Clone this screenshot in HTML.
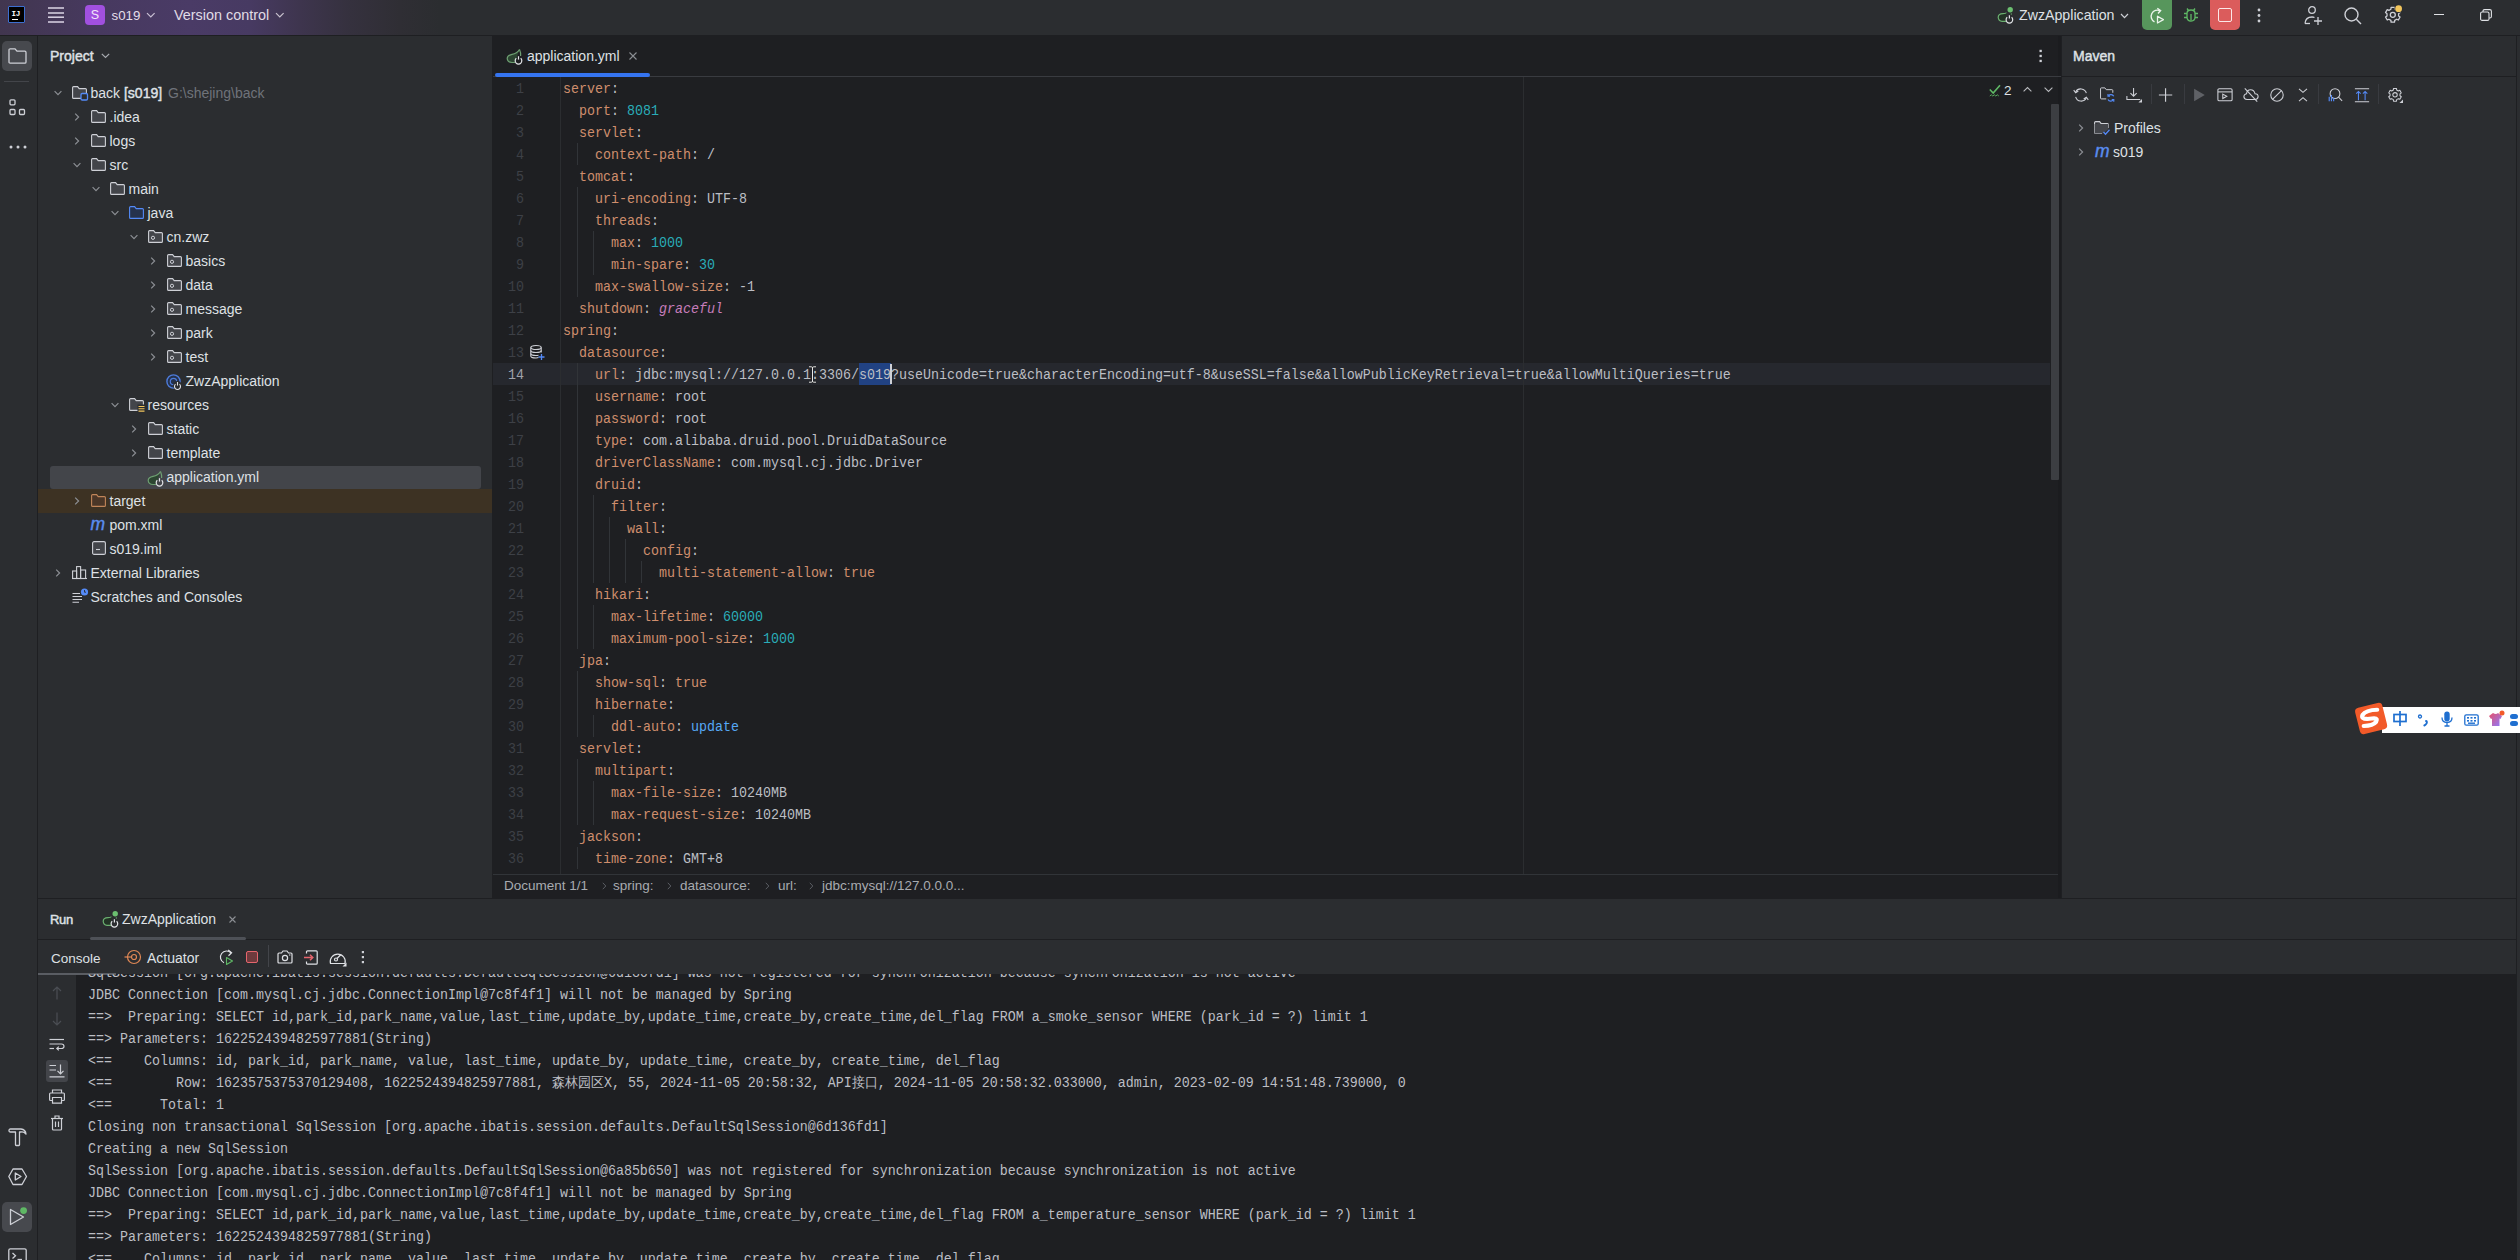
<!DOCTYPE html><html><head><meta charset="utf-8"><style>
*{margin:0;padding:0;box-sizing:border-box}
html,body{width:2520px;height:1260px;overflow:hidden;background:#2B2D30;font-family:"Liberation Sans",sans-serif;color:#DFE1E5;font-size:14px}
.a{position:absolute}
.m{font-family:"Liberation Mono",monospace;font-size:13.333px}
svg{position:absolute;overflow:visible}
#title{left:0;top:0;width:2520px;height:35px;background:linear-gradient(90deg,#41364F 0px,#47395F 100px,#4a3b66 190px,#473a62 250px,#3e354e 300px,#35313e 350px,#2f2e34 400px,#2B2D30 440px)}
.t{position:absolute;white-space:pre;line-height:17px}
.ln{position:absolute;white-space:pre;height:22px;line-height:22px;font-family:"Liberation Mono",monospace;font-size:13.333px;transform:translateY(0.8px) scale(1,1.07);transform-origin:0 14.5px}
.k{color:#CF8E6D}.n{color:#2AACB8}.v{color:#BCBEC4}.g{color:#C77DBB;font-style:italic}.b{color:#56A8F5}
.cj{display:inline-block;width:13px;text-align:center;font-size:13px;letter-spacing:0}
</style></head><body><div id="title" class="a"></div>
<div class="a" style="left:0px;top:35px;width:2520px;height:1px;background:#1E1F22;"></div>
<div class="a" style="left:37px;top:36px;width:1px;height:1224px;background:#1E1F22;"></div>
<div class="a" style="left:492px;top:36px;width:1px;height:862px;background:#1E1F22;"></div>
<div class="a" style="left:493px;top:36px;width:1568px;height:862px;background:#1E1F22;"></div>
<div class="a" style="left:2058px;top:36px;width:3px;height:862px;background:#1B1C1F;"></div>
<div class="a" style="left:2061px;top:36px;width:1px;height:862px;background:#1E1F22;"></div>
<div class="a" style="left:38px;top:898px;width:2478px;height:1px;background:#1E1F22;"></div>
<div class="a" style="left:76px;top:974px;width:2440px;height:286px;background:#1E1F22;"></div>
<div class="a" style="left:2516px;top:36px;width:1px;height:1224px;background:#1E1F22;"></div>
<!-- TITLE CONTENT -->
<div class="a" style="left:8px;top:6px;width:17px;height:17px;background:#000;border:1.3px solid #3d6fd0;border-radius:1px"></div>
<div class="a" style="left:11.5px;top:9.5px;font:bold 7.6px 'Liberation Mono',monospace;color:#fff;letter-spacing:-0.3px;line-height:8px">IJ</div>
<div class="a" style="left:12px;top:18.5px;width:6px;height:1.5px;background:#fff"></div>
<svg style="left:48px;top:7px" width="16" height="16"><g stroke="#D3CCDD" stroke-width="1.6"><line x1="0" y1="1" x2="16" y2="1"/><line x1="0" y1="6" x2="16" y2="6"/><line x1="0" y1="10.2" x2="16" y2="10.2"/><line x1="0" y1="15" x2="16" y2="15"/></g></svg>
<div class="a" style="left:85px;top:5px;width:20px;height:20px;background:#A150DF;border-radius:4px;color:#F3E6FA;font-size:12.5px;line-height:20px;text-align:center">S</div>
<div class="a" style="left:111.5px;top:7px;font-size:13.3px;line-height:17px;color:#E4DEEA">s019</div>
<svg style="left:146px;top:12px" width="10" height="7"><path d="M1 1.2 L4.8 5 L8.6 1.2" fill="none" stroke="#C9C0D4" stroke-width="1.2"/></svg>
<div class="a" style="left:174px;top:7px;font-size:14.4px;line-height:17px;color:#E0DCE6">Version control</div>
<svg style="left:275px;top:12px" width="10" height="7"><path d="M1 1.2 L4.8 5 L8.6 1.2" fill="none" stroke="#C9C3CF" stroke-width="1.2"/></svg>


<svg style="left:1994px;top:4px" width="22" height="22" viewBox="0 0 22 22"><path d="M12.4 8.6 Q12 9.6 9 9.6 Q4.2 9.6 4.2 13.5 Q4.6 17.1 8 17.3 L12 17.3" fill="#223325" stroke="#6BAF70" stroke-width="1.2"/><circle cx="16.2" cy="5.7" r="2.7" fill="#6BBF70"/><path d="M17.3 9 V11" stroke="#5E8F62" stroke-width="0.9"/><path d="M13.2 13.3 A3.3 3.3 0 1 0 17.6 13.3" fill="none" stroke="#E3E5E8" stroke-width="1.2"/><path d="M15.4 11.2 V14.6" stroke="#E3E5E8" stroke-width="1.2"/></svg>

<div class="a" style="left:2019px;top:7px;font-size:14.2px;line-height:17px;color:#DFE1E5">ZwzApplication</div>
<svg style="left:2120px;top:13px" width="10" height="7"><path d="M1 1 L4.5 4.7 L8 1" fill="none" stroke="#CED0D6" stroke-width="1.2"/></svg>
<div class="a" style="left:2142px;top:-4px;width:30px;height:34px;background:#57965C;border-radius:5px"></div>
<svg style="left:2148px;top:7px" width="18" height="18" viewBox="0 0 18 18"><path d="M12.2 3.8 A6 6 0 1 0 6.5 14.8" fill="none" stroke="#EAF3EA" stroke-width="1.4"/><path d="M9.3 1.3 L12.6 3.6 L10 6.4" fill="none" stroke="#EAF3EA" stroke-width="1.4"/><path d="M9.5 9.2 L15.4 12.6 L9.5 16 Z" fill="none" stroke="#EAF3EA" stroke-width="1.3" stroke-linejoin="round"/></svg>
<svg style="left:2183px;top:7px" width="16" height="16" viewBox="0 0 16 16"><g fill="none" stroke="#5FB865" stroke-width="1.3"><path d="M4 6.5 Q4 3 8 3 Q12 3 12 6.5 L12 10 Q12 14 8 14 Q4 14 4 10 Z"/><path d="M5.5 3.5 L4 1.5 M10.5 3.5 L12 1.5"/><path d="M1 6.5 H4 M12 6.5 H15 M1 10.5 H4 M12 10.5 H15"/><path d="M8 7 V13"/></g></svg>
<div class="a" style="left:2210px;top:-4px;width:30px;height:34px;background:#DB5C5C;border-radius:5px"></div>
<div class="a" style="left:2218px;top:8px;width:14px;height:14px;border:1.5px solid #FBE8E8;border-radius:2px"></div>
<svg style="left:2256px;top:8px" width="6" height="16"><g fill="#CED0D6"><circle cx="3" cy="2" r="1.4"/><circle cx="3" cy="7.5" r="1.4"/><circle cx="3" cy="13" r="1.4"/></g></svg>
<svg style="left:2304px;top:6px" width="19" height="19" viewBox="0 0 19 19"><g fill="none" stroke="#CED0D6" stroke-width="1.3"><circle cx="8" cy="4" r="3.3"/><path d="M1 17.5 Q1.5 11 8 11 Q9.5 11 10.5 11.5"/><path d="M1 17.5 H6"/><path d="M14 11 V19 M10 15 H18"/></g></svg>
<svg style="left:2344px;top:7px" width="18" height="18" viewBox="0 0 18 18"><g fill="none" stroke="#CED0D6" stroke-width="1.4"><circle cx="7.5" cy="7.5" r="6.5"/><path d="M12.3 12.3 L17 17"/></g></svg>
<svg style="left:2384px;top:6px" width="18" height="19" viewBox="0 0 18 19"><g fill="none" stroke="#CED0D6" stroke-width="1.3" stroke-linejoin="round"><path d="M14.59 9.93 L16.07 11.02 L14.36 13.98 L12.67 13.25 L10.72 14.38 L10.51 16.21 L7.09 16.21 L6.88 14.38 L4.93 13.25 L3.24 13.98 L1.53 11.02 L3.01 9.93 L3.01 7.67 L1.53 6.58 L3.24 3.62 L4.93 4.35 L6.88 3.22 L7.09 1.39 L10.51 1.39 L10.72 3.22 L12.67 4.35 L14.36 3.62 L16.07 6.58 L14.59 7.67 Z"/><circle cx="8.8" cy="8.8" r="2.5"/></g><circle cx="14.6" cy="2.7" r="4.3" fill="#2B2D30"/><circle cx="14.6" cy="2.7" r="3.4" fill="#F2C55C"/></svg>
<div class="a" style="left:2434px;top:14px;width:10px;height:1.2px;background:#DFE1E5"></div>
<svg style="left:2480px;top:9px" width="12" height="12" viewBox="0 0 12 12"><g fill="none" stroke="#DFE1E5" stroke-width="1.1"><rect x="0.6" y="3" width="8.4" height="8.4" rx="1.5"/><path d="M3 3 V2.2 Q3 0.6 4.6 0.6 H9.8 Q11.4 0.6 11.4 2.2 V7.4 Q11.4 9 9.8 9 H9"/></g></svg>


<div class="t" style="left:50px;top:48px;font-size:14px;color:#DFE1E5;-webkit-text-stroke:0.45px #DFE1E5">Project</div>
<svg style="left:101px;top:53px" width="9" height="6" viewBox="0 0 9 6"><path d="M0.8 0.8 L4.5 4.5 L8.2 0.8" fill="none" stroke="#A8ABB0" stroke-width="1.2"/></svg>
<div class="a" style="left:50px;top:466px;width:431px;height:23px;background:#43454A;border-radius:3px"></div>
<div class="a" style="left:38px;top:489px;width:454px;height:24px;background:#3D3223;"></div>
<svg style="left:53.5px;top:90px" width="8" height="6" viewBox="0 0 8 6"><path d="M0.6 1.2 L4 4.6 L7.4 1.2" fill="none" stroke="#8C8F94" stroke-width="1.2"/></svg>
<svg style="left:72px;top:86px" width="15" height="13" viewBox="0 0 15 13"><path d="M0.6 1.6 Q0.6 0.6 1.6 0.6 H5.6 L7.2 2.6 H13.4 Q14.4 2.6 14.4 3.6 V11.4 Q14.4 12.4 13.4 12.4 H1.6 Q0.6 12.4 0.6 11.4 Z" fill="#43454A" stroke="#CED0D6" stroke-width="1.1"/><rect x="9" y="7.5" width="6.5" height="6.5" rx="1.2" fill="#2B2D30" stroke="#548AF7" stroke-width="1.3"/></svg>
<div class="t" style="left:90.5px;top:85px;font-size:14px;color:#DFE1E5;">back <span style="-webkit-text-stroke:0.45px #DFE1E5">[s019]</span></div>
<div class="t" style="left:168px;top:85px;font-size:14px;color:#6F737A;">G:\shejing\back</div>
<svg style="left:73.5px;top:113px" width="6" height="8" viewBox="0 0 6 8"><path d="M1.2 0.6 L4.6 4 L1.2 7.4" fill="none" stroke="#8C8F94" stroke-width="1.2"/></svg>
<svg style="left:91px;top:110px" width="15" height="13" viewBox="0 0 15 13"><path d="M0.6 1.6 Q0.6 0.6 1.6 0.6 H5.6 L7.2 2.6 H13.4 Q14.4 2.6 14.4 3.6 V11.4 Q14.4 12.4 13.4 12.4 H1.6 Q0.6 12.4 0.6 11.4 Z" fill="#43454A" stroke="#CED0D6" stroke-width="1.1"/></svg>
<div class="t" style="left:109.5px;top:109px;font-size:14px;color:#DFE1E5;">.idea</div>
<svg style="left:73.5px;top:137px" width="6" height="8" viewBox="0 0 6 8"><path d="M1.2 0.6 L4.6 4 L1.2 7.4" fill="none" stroke="#8C8F94" stroke-width="1.2"/></svg>
<svg style="left:91px;top:134px" width="15" height="13" viewBox="0 0 15 13"><path d="M0.6 1.6 Q0.6 0.6 1.6 0.6 H5.6 L7.2 2.6 H13.4 Q14.4 2.6 14.4 3.6 V11.4 Q14.4 12.4 13.4 12.4 H1.6 Q0.6 12.4 0.6 11.4 Z" fill="#43454A" stroke="#CED0D6" stroke-width="1.1"/></svg>
<div class="t" style="left:109.5px;top:133px;font-size:14px;color:#DFE1E5;">logs</div>
<svg style="left:72.5px;top:162px" width="8" height="6" viewBox="0 0 8 6"><path d="M0.6 1.2 L4 4.6 L7.4 1.2" fill="none" stroke="#8C8F94" stroke-width="1.2"/></svg>
<svg style="left:91px;top:158px" width="15" height="13" viewBox="0 0 15 13"><path d="M0.6 1.6 Q0.6 0.6 1.6 0.6 H5.6 L7.2 2.6 H13.4 Q14.4 2.6 14.4 3.6 V11.4 Q14.4 12.4 13.4 12.4 H1.6 Q0.6 12.4 0.6 11.4 Z" fill="#43454A" stroke="#CED0D6" stroke-width="1.1"/></svg>
<div class="t" style="left:109.5px;top:157px;font-size:14px;color:#DFE1E5;">src</div>
<svg style="left:91.5px;top:186px" width="8" height="6" viewBox="0 0 8 6"><path d="M0.6 1.2 L4 4.6 L7.4 1.2" fill="none" stroke="#8C8F94" stroke-width="1.2"/></svg>
<svg style="left:110px;top:182px" width="15" height="13" viewBox="0 0 15 13"><path d="M0.6 1.6 Q0.6 0.6 1.6 0.6 H5.6 L7.2 2.6 H13.4 Q14.4 2.6 14.4 3.6 V11.4 Q14.4 12.4 13.4 12.4 H1.6 Q0.6 12.4 0.6 11.4 Z" fill="#43454A" stroke="#CED0D6" stroke-width="1.1"/></svg>
<div class="t" style="left:128.5px;top:181px;font-size:14px;color:#DFE1E5;">main</div>
<svg style="left:110.5px;top:210px" width="8" height="6" viewBox="0 0 8 6"><path d="M0.6 1.2 L4 4.6 L7.4 1.2" fill="none" stroke="#8C8F94" stroke-width="1.2"/></svg>
<svg style="left:129px;top:206px" width="15" height="13" viewBox="0 0 15 13"><path d="M0.6 1.6 Q0.6 0.6 1.6 0.6 H5.6 L7.2 2.6 H13.4 Q14.4 2.6 14.4 3.6 V11.4 Q14.4 12.4 13.4 12.4 H1.6 Q0.6 12.4 0.6 11.4 Z" fill="#25324D" stroke="#548AF7" stroke-width="1.1"/></svg>
<div class="t" style="left:147.5px;top:205px;font-size:14px;color:#DFE1E5;">java</div>
<svg style="left:129.5px;top:234px" width="8" height="6" viewBox="0 0 8 6"><path d="M0.6 1.2 L4 4.6 L7.4 1.2" fill="none" stroke="#8C8F94" stroke-width="1.2"/></svg>
<svg style="left:148px;top:230px" width="15" height="13" viewBox="0 0 15 13"><path d="M0.6 1.6 Q0.6 0.6 1.6 0.6 H5.6 L7.2 2.6 H13.4 Q14.4 2.6 14.4 3.6 V11.4 Q14.4 12.4 13.4 12.4 H1.6 Q0.6 12.4 0.6 11.4 Z" fill="#43454A" stroke="#CED0D6" stroke-width="1.1"/><circle cx="5" cy="7.8" r="1.6" fill="none" stroke="#CED0D6" stroke-width="1"/></svg>
<div class="t" style="left:166.5px;top:229px;font-size:14px;color:#DFE1E5;">cn.zwz</div>
<svg style="left:149.5px;top:257px" width="6" height="8" viewBox="0 0 6 8"><path d="M1.2 0.6 L4.6 4 L1.2 7.4" fill="none" stroke="#8C8F94" stroke-width="1.2"/></svg>
<svg style="left:167px;top:254px" width="15" height="13" viewBox="0 0 15 13"><path d="M0.6 1.6 Q0.6 0.6 1.6 0.6 H5.6 L7.2 2.6 H13.4 Q14.4 2.6 14.4 3.6 V11.4 Q14.4 12.4 13.4 12.4 H1.6 Q0.6 12.4 0.6 11.4 Z" fill="#43454A" stroke="#CED0D6" stroke-width="1.1"/><circle cx="5" cy="7.8" r="1.6" fill="none" stroke="#CED0D6" stroke-width="1"/></svg>
<div class="t" style="left:185.5px;top:253px;font-size:14px;color:#DFE1E5;">basics</div>
<svg style="left:149.5px;top:281px" width="6" height="8" viewBox="0 0 6 8"><path d="M1.2 0.6 L4.6 4 L1.2 7.4" fill="none" stroke="#8C8F94" stroke-width="1.2"/></svg>
<svg style="left:167px;top:278px" width="15" height="13" viewBox="0 0 15 13"><path d="M0.6 1.6 Q0.6 0.6 1.6 0.6 H5.6 L7.2 2.6 H13.4 Q14.4 2.6 14.4 3.6 V11.4 Q14.4 12.4 13.4 12.4 H1.6 Q0.6 12.4 0.6 11.4 Z" fill="#43454A" stroke="#CED0D6" stroke-width="1.1"/><circle cx="5" cy="7.8" r="1.6" fill="none" stroke="#CED0D6" stroke-width="1"/></svg>
<div class="t" style="left:185.5px;top:277px;font-size:14px;color:#DFE1E5;">data</div>
<svg style="left:149.5px;top:305px" width="6" height="8" viewBox="0 0 6 8"><path d="M1.2 0.6 L4.6 4 L1.2 7.4" fill="none" stroke="#8C8F94" stroke-width="1.2"/></svg>
<svg style="left:167px;top:302px" width="15" height="13" viewBox="0 0 15 13"><path d="M0.6 1.6 Q0.6 0.6 1.6 0.6 H5.6 L7.2 2.6 H13.4 Q14.4 2.6 14.4 3.6 V11.4 Q14.4 12.4 13.4 12.4 H1.6 Q0.6 12.4 0.6 11.4 Z" fill="#43454A" stroke="#CED0D6" stroke-width="1.1"/><circle cx="5" cy="7.8" r="1.6" fill="none" stroke="#CED0D6" stroke-width="1"/></svg>
<div class="t" style="left:185.5px;top:301px;font-size:14px;color:#DFE1E5;">message</div>
<svg style="left:149.5px;top:329px" width="6" height="8" viewBox="0 0 6 8"><path d="M1.2 0.6 L4.6 4 L1.2 7.4" fill="none" stroke="#8C8F94" stroke-width="1.2"/></svg>
<svg style="left:167px;top:326px" width="15" height="13" viewBox="0 0 15 13"><path d="M0.6 1.6 Q0.6 0.6 1.6 0.6 H5.6 L7.2 2.6 H13.4 Q14.4 2.6 14.4 3.6 V11.4 Q14.4 12.4 13.4 12.4 H1.6 Q0.6 12.4 0.6 11.4 Z" fill="#43454A" stroke="#CED0D6" stroke-width="1.1"/><circle cx="5" cy="7.8" r="1.6" fill="none" stroke="#CED0D6" stroke-width="1"/></svg>
<div class="t" style="left:185.5px;top:325px;font-size:14px;color:#DFE1E5;">park</div>
<svg style="left:149.5px;top:353px" width="6" height="8" viewBox="0 0 6 8"><path d="M1.2 0.6 L4.6 4 L1.2 7.4" fill="none" stroke="#8C8F94" stroke-width="1.2"/></svg>
<svg style="left:167px;top:350px" width="15" height="13" viewBox="0 0 15 13"><path d="M0.6 1.6 Q0.6 0.6 1.6 0.6 H5.6 L7.2 2.6 H13.4 Q14.4 2.6 14.4 3.6 V11.4 Q14.4 12.4 13.4 12.4 H1.6 Q0.6 12.4 0.6 11.4 Z" fill="#43454A" stroke="#CED0D6" stroke-width="1.1"/><circle cx="5" cy="7.8" r="1.6" fill="none" stroke="#CED0D6" stroke-width="1"/></svg>
<div class="t" style="left:185.5px;top:349px;font-size:14px;color:#DFE1E5;">test</div>
<svg style="left:166px;top:373.5px" width="17" height="17" viewBox="0 0 17 17"><circle cx="7.5" cy="7.5" r="6.6" fill="#25324D" stroke="#4D7BDA" stroke-width="1.4"/><circle cx="7.5" cy="7.5" r="3.2" fill="none" stroke="#4D7BDA" stroke-width="1.2"/><circle cx="11.5" cy="11.5" r="4.4" fill="#2B2D30"/><path d="M9.5 10.2 A3 3 0 1 0 13.5 10.2" fill="none" stroke="#DFE1E5" stroke-width="1.1"/><line x1="11.5" y1="8" x2="11.5" y2="11.6" stroke="#DFE1E5" stroke-width="1.1"/></svg>
<div class="t" style="left:185.5px;top:373px;font-size:14px;color:#DFE1E5;">ZwzApplication</div>
<svg style="left:110.5px;top:402px" width="8" height="6" viewBox="0 0 8 6"><path d="M0.6 1.2 L4 4.6 L7.4 1.2" fill="none" stroke="#8C8F94" stroke-width="1.2"/></svg>
<svg style="left:129px;top:398px" width="15" height="13" viewBox="0 0 15 13"><path d="M0.6 1.6 Q0.6 0.6 1.6 0.6 H5.6 L7.2 2.6 H13.4 Q14.4 2.6 14.4 3.6 V11.4 Q14.4 12.4 13.4 12.4 H1.6 Q0.6 12.4 0.6 11.4 Z" fill="#43454A" stroke="#CED0D6" stroke-width="1.1"/><rect x="8.5" y="6.5" width="7.5" height="8" fill="#2B2D30"/><path d="M9.5 8.5 H15.5 M9.5 10.8 H15.5 M9.5 13.1 H15.5" stroke="#F2C55C" stroke-width="1.1"/></svg>
<div class="t" style="left:147.5px;top:397px;font-size:14px;color:#DFE1E5;">resources</div>
<svg style="left:130.5px;top:425px" width="6" height="8" viewBox="0 0 6 8"><path d="M1.2 0.6 L4.6 4 L1.2 7.4" fill="none" stroke="#8C8F94" stroke-width="1.2"/></svg>
<svg style="left:148px;top:422px" width="15" height="13" viewBox="0 0 15 13"><path d="M0.6 1.6 Q0.6 0.6 1.6 0.6 H5.6 L7.2 2.6 H13.4 Q14.4 2.6 14.4 3.6 V11.4 Q14.4 12.4 13.4 12.4 H1.6 Q0.6 12.4 0.6 11.4 Z" fill="#43454A" stroke="#CED0D6" stroke-width="1.1"/></svg>
<div class="t" style="left:166.5px;top:421px;font-size:14px;color:#DFE1E5;">static</div>
<svg style="left:130.5px;top:449px" width="6" height="8" viewBox="0 0 6 8"><path d="M1.2 0.6 L4.6 4 L1.2 7.4" fill="none" stroke="#8C8F94" stroke-width="1.2"/></svg>
<svg style="left:148px;top:446px" width="15" height="13" viewBox="0 0 15 13"><path d="M0.6 1.6 Q0.6 0.6 1.6 0.6 H5.6 L7.2 2.6 H13.4 Q14.4 2.6 14.4 3.6 V11.4 Q14.4 12.4 13.4 12.4 H1.6 Q0.6 12.4 0.6 11.4 Z" fill="#43454A" stroke="#CED0D6" stroke-width="1.1"/></svg>
<div class="t" style="left:166.5px;top:445px;font-size:14px;color:#DFE1E5;">template</div>
<svg style="left:142.5px;top:465.5px" width="22" height="22" viewBox="0 0 22 22"><path d="M17.5 5.5 Q15 9.5 10 10.3 Q5.2 11.2 5.2 14.5 Q5.5 18.3 10 18.5 L13 18.5" fill="#2C4531" stroke="#6E9F72" stroke-width="1.2"/><path d="M17.5 5.5 Q18.9 8.5 18.6 12" fill="none" stroke="#6E9F72" stroke-width="1.2"/><path d="M14.3 14.3 A3.3 3.3 0 1 0 18.7 14.3" fill="none" stroke="#E3E5E8" stroke-width="1.2"/><path d="M16.5 12.2 V15.6" stroke="#E3E5E8" stroke-width="1.2"/></svg>
<div class="t" style="left:166.5px;top:469px;font-size:14px;color:#DFE1E5;">application.yml</div>
<svg style="left:73.5px;top:497px" width="6" height="8" viewBox="0 0 6 8"><path d="M1.2 0.6 L4.6 4 L1.2 7.4" fill="none" stroke="#8C8F94" stroke-width="1.2"/></svg>
<svg style="left:91px;top:494px" width="15" height="13" viewBox="0 0 15 13"><path d="M0.6 1.6 Q0.6 0.6 1.6 0.6 H5.6 L7.2 2.6 H13.4 Q14.4 2.6 14.4 3.6 V11.4 Q14.4 12.4 13.4 12.4 H1.6 Q0.6 12.4 0.6 11.4 Z" fill="#4A3627" stroke="#C08559" stroke-width="1.1"/></svg>
<div class="t" style="left:109.5px;top:493px;font-size:14px;color:#DFE1E5;">target</div>
<div class="t" style="left:90.5px;top:515.5px;font-size:17.5px;color:#5A8DF0;font-style:italic;line-height:17px;letter-spacing:-1px;-webkit-text-stroke:0.4px #5A8DF0">m</div>
<div class="t" style="left:109.5px;top:517px;font-size:14px;color:#DFE1E5;">pom.xml</div>
<svg style="left:92px;top:541px" width="14" height="14" viewBox="0 0 14 14"><rect x="0.6" y="0.6" width="12.8" height="12.8" rx="1.5" fill="#43454A" stroke="#CED0D6" stroke-width="1.1"/><path d="M4 8.5 H8" stroke="#CED0D6" stroke-width="1.1"/></svg>
<div class="t" style="left:109.5px;top:541px;font-size:14px;color:#DFE1E5;">s019.iml</div>
<svg style="left:54.5px;top:569px" width="6" height="8" viewBox="0 0 6 8"><path d="M1.2 0.6 L4.6 4 L1.2 7.4" fill="none" stroke="#8C8F94" stroke-width="1.2"/></svg>
<svg style="left:72px;top:566px" width="15" height="13" viewBox="0 0 15 13"><g fill="none" stroke="#CED0D6" stroke-width="1.1"><rect x="0.6" y="5" width="4" height="7.5"/><rect x="4.6" y="0.6" width="4" height="11.9"/><rect x="8.6" y="4" width="5" height="8.5"/><path d="M0 12.5 H15"/></g></svg>
<div class="t" style="left:90.5px;top:565px;font-size:14px;color:#DFE1E5;">External Libraries</div>
<svg style="left:72px;top:588px" width="17" height="15" viewBox="0 0 17 15"><g stroke="#CED0D6" stroke-width="1.1"><path d="M0.5 5.5 H8 M0.5 8.5 H10 M0.5 11.5 H10 M0.5 14.2 H7"/></g><circle cx="12.5" cy="4" r="3.6" fill="#548AF7"/><path d="M12.5 2 V4.2 H14" fill="none" stroke="#2B2D30" stroke-width="0.9"/></svg>
<div class="t" style="left:90.5px;top:589px;font-size:14px;color:#DFE1E5;">Scratches and Consoles</div>
<svg style="left:502px;top:44px" width="22" height="22" viewBox="0 0 22 22"><path d="M17.5 5.5 Q15 9.5 10 10.3 Q5.2 11.2 5.2 14.5 Q5.5 18.3 10 18.5 L13 18.5" fill="#2C4531" stroke="#6E9F72" stroke-width="1.2"/><path d="M17.5 5.5 Q18.9 8.5 18.6 12" fill="none" stroke="#6E9F72" stroke-width="1.2"/><path d="M14.3 14.3 A3.3 3.3 0 1 0 18.7 14.3" fill="none" stroke="#E3E5E8" stroke-width="1.2"/><path d="M16.5 12.2 V15.6" stroke="#E3E5E8" stroke-width="1.2"/></svg>
<div class="t" style="left:527px;top:48px;font-size:14px;color:#DFE1E5;">application.yml</div>
<svg style="left:629px;top:52px" width="8" height="8" viewBox="0 0 8 8"><path d="M0.5 0.5 L7.5 7.5 M7.5 0.5 L0.5 7.5" stroke="#8C8F94" stroke-width="1.1"/></svg>
<div class="a" style="left:493px;top:76px;width:1568px;height:1px;background:#393B40;"></div>
<div class="a" style="left:495px;top:73px;width:155px;height:3.5px;background:#3574F0;border-radius:2px"></div>
<svg style="left:2039px;top:49px" width="4" height="14" viewBox="0 0 4 14"><g fill="#CED0D6"><rect x="0.5" y="0.8" width="2.3" height="2.3"/><rect x="0.5" y="5.8" width="2.3" height="2.3"/><rect x="0.5" y="10.8" width="2.3" height="2.3"/></g></svg>
<div class="a" style="left:493px;top:363px;width:1557px;height:22px;background:#26282E;"></div>
<div class="a" style="left:560px;top:77px;width:1px;height:797px;background:#2B2D30;"></div>
<div class="a" style="left:1523px;top:77px;width:1px;height:797px;background:#2B2D30;"></div>
<svg style="left:1989px;top:84px" width="12" height="13" viewBox="0 0 12 13"><path d="M0.8 5.5 L4.2 9 L11 1.2" fill="none" stroke="#5FB865" stroke-width="1.6"/><path d="M0.8 12 L2.3 10.8 L3.8 12 L5.3 10.8 L6.8 12 L8.3 10.8 L9.8 12" fill="none" stroke="#5FB865" stroke-width="0.9"/></svg>
<div class="t" style="left:2004px;top:82px;font-size:13.5px;color:#DFE1E5;">2</div>
<svg style="left:2023px;top:87px" width="9" height="5" viewBox="0 0 9 5"><path d="M0.6 4.4 L4.5 0.6 L8.4 4.4" fill="none" stroke="#B7B9BD" stroke-width="1.1"/></svg>
<svg style="left:2044px;top:87px" width="9" height="5" viewBox="0 0 9 5"><path d="M0.6 0.6 L4.5 4.4 L8.4 0.6" fill="none" stroke="#B7B9BD" stroke-width="1.1"/></svg>
<div class="a" style="left:2051px;top:104px;width:8px;height:376px;background:#3C3E42;border-radius:1px"></div>
<div class="a" style="left:577px;top:143px;width:1px;height:22px;background:#313438;"></div>
<div class="a" style="left:577px;top:187px;width:1px;height:110px;background:#313438;"></div>
<div class="a" style="left:593px;top:231px;width:1px;height:44px;background:#313438;"></div>
<div class="a" style="left:577px;top:363px;width:1px;height:286px;background:#313438;"></div>
<div class="a" style="left:593px;top:495px;width:1px;height:88px;background:#313438;"></div>
<div class="a" style="left:609px;top:517px;width:1px;height:66px;background:#313438;"></div>
<div class="a" style="left:625px;top:539px;width:1px;height:44px;background:#313438;"></div>
<div class="a" style="left:641px;top:561px;width:1px;height:22px;background:#313438;"></div>
<div class="a" style="left:593px;top:605px;width:1px;height:44px;background:#313438;"></div>
<div class="a" style="left:577px;top:671px;width:1px;height:66px;background:#313438;"></div>
<div class="a" style="left:593px;top:715px;width:1px;height:22px;background:#313438;"></div>
<div class="a" style="left:577px;top:759px;width:1px;height:66px;background:#313438;"></div>
<div class="a" style="left:593px;top:781px;width:1px;height:44px;background:#313438;"></div>
<div class="a" style="left:577px;top:847px;width:1px;height:22px;background:#313438;"></div>
<div class="a" style="left:859px;top:363px;width:32px;height:22px;background:#214283;"></div>
<div class="ln" style="left:484px;top:78px;width:40px;text-align:right;color:#3D4046">1</div>
<div class="ln" style="left:563px;top:78px"><span class="k">server</span><span class="v">:</span></div>
<div class="ln" style="left:484px;top:100px;width:40px;text-align:right;color:#3D4046">2</div>
<div class="ln" style="left:579px;top:100px"><span class="k">port</span><span class="v">: </span><span class="n">8081</span></div>
<div class="ln" style="left:484px;top:122px;width:40px;text-align:right;color:#3D4046">3</div>
<div class="ln" style="left:579px;top:122px"><span class="k">servlet</span><span class="v">:</span></div>
<div class="ln" style="left:484px;top:144px;width:40px;text-align:right;color:#3D4046">4</div>
<div class="ln" style="left:595px;top:144px"><span class="k">context-path</span><span class="v">: /</span></div>
<div class="ln" style="left:484px;top:166px;width:40px;text-align:right;color:#3D4046">5</div>
<div class="ln" style="left:579px;top:166px"><span class="k">tomcat</span><span class="v">:</span></div>
<div class="ln" style="left:484px;top:188px;width:40px;text-align:right;color:#3D4046">6</div>
<div class="ln" style="left:595px;top:188px"><span class="k">uri-encoding</span><span class="v">: UTF-8</span></div>
<div class="ln" style="left:484px;top:210px;width:40px;text-align:right;color:#3D4046">7</div>
<div class="ln" style="left:595px;top:210px"><span class="k">threads</span><span class="v">:</span></div>
<div class="ln" style="left:484px;top:232px;width:40px;text-align:right;color:#3D4046">8</div>
<div class="ln" style="left:611px;top:232px"><span class="k">max</span><span class="v">: </span><span class="n">1000</span></div>
<div class="ln" style="left:484px;top:254px;width:40px;text-align:right;color:#3D4046">9</div>
<div class="ln" style="left:611px;top:254px"><span class="k">min-spare</span><span class="v">: </span><span class="n">30</span></div>
<div class="ln" style="left:484px;top:276px;width:40px;text-align:right;color:#3D4046">10</div>
<div class="ln" style="left:595px;top:276px"><span class="k">max-swallow-size</span><span class="v">: -1</span></div>
<div class="ln" style="left:484px;top:298px;width:40px;text-align:right;color:#3D4046">11</div>
<div class="ln" style="left:579px;top:298px"><span class="k">shutdown</span><span class="v">: </span><span class="g">graceful</span></div>
<div class="ln" style="left:484px;top:320px;width:40px;text-align:right;color:#3D4046">12</div>
<div class="ln" style="left:563px;top:320px"><span class="k">spring</span><span class="v">:</span></div>
<div class="ln" style="left:484px;top:342px;width:40px;text-align:right;color:#3D4046">13</div>
<div class="ln" style="left:579px;top:342px"><span class="k">datasource</span><span class="v">:</span></div>
<div class="ln" style="left:484px;top:364px;width:40px;text-align:right;color:#A1A3AB">14</div>
<div class="ln" style="left:595px;top:364px"><span class="k">url</span><span class="v">: jdbc:mysql://127.0.0.1:3306/s019?useUnicode=true&amp;characterEncoding=utf-8&amp;useSSL=false&amp;allowPublicKeyRetrieval=true&amp;allowMultiQueries=true</span></div>
<div class="ln" style="left:484px;top:386px;width:40px;text-align:right;color:#3D4046">15</div>
<div class="ln" style="left:595px;top:386px"><span class="k">username</span><span class="v">: root</span></div>
<div class="ln" style="left:484px;top:408px;width:40px;text-align:right;color:#3D4046">16</div>
<div class="ln" style="left:595px;top:408px"><span class="k">password</span><span class="v">: root</span></div>
<div class="ln" style="left:484px;top:430px;width:40px;text-align:right;color:#3D4046">17</div>
<div class="ln" style="left:595px;top:430px"><span class="k">type</span><span class="v">: com.alibaba.druid.pool.DruidDataSource</span></div>
<div class="ln" style="left:484px;top:452px;width:40px;text-align:right;color:#3D4046">18</div>
<div class="ln" style="left:595px;top:452px"><span class="k">driverClassName</span><span class="v">: com.mysql.cj.jdbc.Driver</span></div>
<div class="ln" style="left:484px;top:474px;width:40px;text-align:right;color:#3D4046">19</div>
<div class="ln" style="left:595px;top:474px"><span class="k">druid</span><span class="v">:</span></div>
<div class="ln" style="left:484px;top:496px;width:40px;text-align:right;color:#3D4046">20</div>
<div class="ln" style="left:611px;top:496px"><span class="k">filter</span><span class="v">:</span></div>
<div class="ln" style="left:484px;top:518px;width:40px;text-align:right;color:#3D4046">21</div>
<div class="ln" style="left:627px;top:518px"><span class="k">wall</span><span class="v">:</span></div>
<div class="ln" style="left:484px;top:540px;width:40px;text-align:right;color:#3D4046">22</div>
<div class="ln" style="left:643px;top:540px"><span class="k">config</span><span class="v">:</span></div>
<div class="ln" style="left:484px;top:562px;width:40px;text-align:right;color:#3D4046">23</div>
<div class="ln" style="left:659px;top:562px"><span class="k">multi-statement-allow</span><span class="v">: </span><span class="k">true</span></div>
<div class="ln" style="left:484px;top:584px;width:40px;text-align:right;color:#3D4046">24</div>
<div class="ln" style="left:595px;top:584px"><span class="k">hikari</span><span class="v">:</span></div>
<div class="ln" style="left:484px;top:606px;width:40px;text-align:right;color:#3D4046">25</div>
<div class="ln" style="left:611px;top:606px"><span class="k">max-lifetime</span><span class="v">: </span><span class="n">60000</span></div>
<div class="ln" style="left:484px;top:628px;width:40px;text-align:right;color:#3D4046">26</div>
<div class="ln" style="left:611px;top:628px"><span class="k">maximum-pool-size</span><span class="v">: </span><span class="n">1000</span></div>
<div class="ln" style="left:484px;top:650px;width:40px;text-align:right;color:#3D4046">27</div>
<div class="ln" style="left:579px;top:650px"><span class="k">jpa</span><span class="v">:</span></div>
<div class="ln" style="left:484px;top:672px;width:40px;text-align:right;color:#3D4046">28</div>
<div class="ln" style="left:595px;top:672px"><span class="k">show-sql</span><span class="v">: </span><span class="k">true</span></div>
<div class="ln" style="left:484px;top:694px;width:40px;text-align:right;color:#3D4046">29</div>
<div class="ln" style="left:595px;top:694px"><span class="k">hibernate</span><span class="v">:</span></div>
<div class="ln" style="left:484px;top:716px;width:40px;text-align:right;color:#3D4046">30</div>
<div class="ln" style="left:611px;top:716px"><span class="k">ddl-auto</span><span class="v">: </span><span class="b">update</span></div>
<div class="ln" style="left:484px;top:738px;width:40px;text-align:right;color:#3D4046">31</div>
<div class="ln" style="left:579px;top:738px"><span class="k">servlet</span><span class="v">:</span></div>
<div class="ln" style="left:484px;top:760px;width:40px;text-align:right;color:#3D4046">32</div>
<div class="ln" style="left:595px;top:760px"><span class="k">multipart</span><span class="v">:</span></div>
<div class="ln" style="left:484px;top:782px;width:40px;text-align:right;color:#3D4046">33</div>
<div class="ln" style="left:611px;top:782px"><span class="k">max-file-size</span><span class="v">: 10240MB</span></div>
<div class="ln" style="left:484px;top:804px;width:40px;text-align:right;color:#3D4046">34</div>
<div class="ln" style="left:611px;top:804px"><span class="k">max-request-size</span><span class="v">: 10240MB</span></div>
<div class="ln" style="left:484px;top:826px;width:40px;text-align:right;color:#3D4046">35</div>
<div class="ln" style="left:579px;top:826px"><span class="k">jackson</span><span class="v">:</span></div>
<div class="ln" style="left:484px;top:848px;width:40px;text-align:right;color:#3D4046">36</div>
<div class="ln" style="left:595px;top:848px"><span class="k">time-zone</span><span class="v">: GMT+8</span></div>
<div class="a" style="left:890px;top:364px;width:2px;height:20px;background:#CED0D6;"></div>
<svg style="left:808px;top:366px" width="9" height="17" viewBox="0 0 9 17"><path d="M1 0.8 H3.5 Q4.5 0.8 4.5 2 V15 Q4.5 16.2 3.5 16.2 H1 M8 0.8 H5.5 Q4.5 0.8 4.5 2 M8 16.2 H5.5 Q4.5 16.2 4.5 15 " fill="none" stroke="#1E1F22" stroke-width="2.2"/><path d="M1 0.8 H3.5 Q4.5 0.8 4.5 2 V15 Q4.5 16.2 3.5 16.2 H1 M8 0.8 H5.5 Q4.5 0.8 4.5 2 M8 16.2 H5.5 Q4.5 16.2 4.5 15 " fill="none" stroke="#E6E6E6" stroke-width="1"/></svg>
<svg style="left:530px;top:345px" width="15" height="15" viewBox="0 0 15 15"><g fill="none" stroke="#CED0D6" stroke-width="1.1"><ellipse cx="6" cy="2.5" rx="5.2" ry="2"/><path d="M0.8 2.5 V11 Q0.8 13 6 13 Q7.5 13 8.5 12.6"/><path d="M11.2 2.5 V7.5"/><path d="M0.8 5.5 Q0.8 7.5 6 7.5 Q11.2 7.5 11.2 5.5"/><path d="M0.8 8.5 Q0.8 10.5 6 10.5 Q7.5 10.5 8.5 10.2"/></g><path d="M11.5 9 V15 M8.5 12 H14.5" stroke="#548AF7" stroke-width="1.3"/></svg>
<div class="a" style="left:493px;top:874px;width:1565px;height:1px;background:#313438;"></div>
<div class="t" style="left:504px;top:877px;font-size:13.5px;color:#A8ABB0;">Document 1/1</div>
<div class="t" style="left:613px;top:877px;font-size:13.5px;color:#A8ABB0;">spring:</div>
<div class="t" style="left:680px;top:877px;font-size:13.5px;color:#A8ABB0;">datasource:</div>
<div class="t" style="left:778px;top:877px;font-size:13.5px;color:#A8ABB0;">url:</div>
<div class="t" style="left:822px;top:877px;font-size:13.5px;color:#A8ABB0;">jdbc:mysql://127.0.0.0...</div>
<svg style="left:602px;top:882px" width="5" height="8" viewBox="0 0 5 8"><path d="M0.8 0.8 L3.8 4 L0.8 7.2" fill="none" stroke="#5A5D63" stroke-width="1"/></svg>
<svg style="left:667px;top:882px" width="5" height="8" viewBox="0 0 5 8"><path d="M0.8 0.8 L3.8 4 L0.8 7.2" fill="none" stroke="#5A5D63" stroke-width="1"/></svg>
<svg style="left:765px;top:882px" width="5" height="8" viewBox="0 0 5 8"><path d="M0.8 0.8 L3.8 4 L0.8 7.2" fill="none" stroke="#5A5D63" stroke-width="1"/></svg>
<svg style="left:809px;top:882px" width="5" height="8" viewBox="0 0 5 8"><path d="M0.8 0.8 L3.8 4 L0.8 7.2" fill="none" stroke="#5A5D63" stroke-width="1"/></svg>
<div class="t" style="left:2073px;top:48px;font-size:14px;color:#DFE1E5;-webkit-text-stroke:0.45px #DFE1E5">Maven</div>
<div class="a" style="left:2062px;top:76px;width:454px;height:1px;background:#1E1F22;"></div>
<svg style="left:2073px;top:86.5px" width="16" height="16" viewBox="0 0 18 18"><g fill="none" stroke="#CED0D6" stroke-width="1.2"><path d="M15 7 A6.5 6.5 0 0 0 3 5.5"/><path d="M3 11 A6.5 6.5 0 0 0 15 12.5"/><path d="M0.8 3.5 L3 6.5 L6 4.5"/><path d="M17.2 14.5 L15 11.5 L12 13.5"/></g></svg>
<svg style="left:2100px;top:86.5px" width="16" height="16" viewBox="0 0 18 18"><g fill="none" stroke="#CED0D6" stroke-width="1.1"><path d="M0.6 2 Q0.6 1 1.6 1 H5.5 L7 3 H13.4 Q14.4 3 14.4 4 V6.5"/><path d="M0.6 2 V12.4 Q0.6 13.4 1.6 13.4 H7"/></g><g fill="none" stroke="#548AF7" stroke-width="1.3"><path d="M15.5 10.5 A3.6 3.6 0 0 0 9.5 10"/><path d="M9 14 A3.6 3.6 0 0 0 15 14.5"/><path d="M9 8 V10.3 H11.3 M15.5 16.5 V14.2 H13.2"/></g></svg>
<svg style="left:2126px;top:86.5px" width="16" height="16" viewBox="0 0 18 18"><g fill="none" stroke="#CED0D6" stroke-width="1.2"><path d="M8.5 1 V10 M5 6.8 L8.5 10.3 L12 6.8"/><path d="M1 10 V14 H16"/></g><path d="M18 13.5 V17.5 H14 Z" fill="#CED0D6"/></svg>
<div class="a" style="left:2151px;top:84px;width:1px;height:20px;background:#393B40;"></div>
<svg style="left:2158px;top:86.5px" width="16" height="16" viewBox="0 0 18 18"><path d="M8.5 1.5 V16.5 M1 9 H16" fill="none" stroke="#CED0D6" stroke-width="1.3"/></svg>
<div class="a" style="left:2184px;top:84px;width:1px;height:20px;background:#393B40;"></div>
<svg style="left:2191px;top:86.5px" width="16" height="16" viewBox="0 0 18 18"><path d="M3.5 2 L15.5 9 L3.5 16 Z" fill="#5F6166"/></svg>
<svg style="left:2217px;top:86.5px" width="16" height="16" viewBox="0 0 18 18"><g fill="none" stroke="#CED0D6" stroke-width="1.2"><rect x="1" y="2" width="16" height="13.5" rx="1.5"/><path d="M1 5.5 H17"/><path d="M6.5 8 L11 10.5 L6.5 13 Z"/></g></svg>
<svg style="left:2243px;top:86.5px" width="16" height="16" viewBox="0 0 18 18"><g fill="none" stroke="#CED0D6" stroke-width="1.2"><path d="M4.5 14 H13.5 Q17 14 17 10.8 Q17 7.5 13.5 7.5 Q12.5 3 8.5 3 Q4.5 3 4 7.5 Q1 8 1 10.8 Q1 14 4.5 14 Z"/><path d="M2 1.5 L16 16.5"/></g></svg>
<svg style="left:2269px;top:86.5px" width="16" height="16" viewBox="0 0 18 18"><g fill="none" stroke="#CED0D6" stroke-width="1.2"><circle cx="9" cy="9" r="7"/><path d="M4 14 L14 4"/></g></svg>
<svg style="left:2295px;top:86.5px" width="16" height="16" viewBox="0 0 18 18"><g fill="none" stroke="#CED0D6" stroke-width="1.2"><path d="M4.5 2 L9 6 L13.5 2"/><path d="M4.5 16 L9 12 L13.5 16"/></g></svg>
<div class="a" style="left:2318px;top:84px;width:1px;height:20px;background:#393B40;"></div>
<svg style="left:2327px;top:86.5px" width="16" height="16" viewBox="0 0 18 18"><g fill="none" stroke="#CED0D6" stroke-width="1.2"><circle cx="9" cy="7.5" r="5.5"/><path d="M13 11.5 L17 15.5"/></g><path d="M2.5 16 V11 M5 16 V9 M7.5 16 V12" stroke="#548AF7" stroke-width="1.3"/></svg>
<svg style="left:2354px;top:86.5px" width="16" height="16" viewBox="0 0 18 18"><g fill="none" stroke="#548AF7" stroke-width="1.2"><path d="M5 15 V5 M2.5 7.5 L5 5 L7.5 7.5"/><path d="M12.5 15 V5 M10 7.5 L12.5 5 L15 7.5"/></g><path d="M1 2 H17 M1 16.5 H17" stroke="#CED0D6" stroke-width="1.2"/></svg>
<div class="a" style="left:2378px;top:84px;width:1px;height:20px;background:#393B40;"></div>
<svg style="left:2387px;top:86.5px" width="16" height="16" viewBox="0 0 18 18"><g fill="none" stroke="#CED0D6" stroke-width="1.2" stroke-linejoin="round"><path d="M14.60 9.89 L16.08 10.96 L14.41 13.85 L12.74 13.10 L10.86 14.19 L10.66 16.01 L7.34 16.01 L7.14 14.19 L5.26 13.10 L3.59 13.85 L1.92 10.96 L3.40 9.89 L3.40 7.71 L1.92 6.64 L3.59 3.75 L5.26 4.50 L7.14 3.41 L7.34 1.59 L10.66 1.59 L10.86 3.41 L12.74 4.50 L14.41 3.75 L16.08 6.64 L14.60 7.71 Z"/><circle cx="9" cy="8.8" r="2.5"/></g><path d="M18 14 V18 H14 Z" fill="#CED0D6"/></svg>
<svg style="left:2078px;top:124px" width="6" height="8" viewBox="0 0 6 8"><path d="M1.2 0.6 L4.6 4 L1.2 7.4" fill="none" stroke="#8C8F94" stroke-width="1.2"/></svg>
<svg style="left:2094px;top:121px" width="17" height="15" viewBox="0 0 17 15"><path d="M0.6 1.6 Q0.6 0.6 1.6 0.6 H5.6 L7.2 2.6 H13.4 Q14.4 2.6 14.4 3.6 V7 M0.6 1.6 V11.4 Q0.6 12.4 1.6 12.4 H8" fill="#43454A" stroke="#CED0D6" stroke-width="1.1"/><path d="M0.6 3 H14.4 V8 L9 12.4 H0.6 Z" fill="#43454A"/><path d="M9.5 11 L11.5 13.2 L15.5 8.8" fill="none" stroke="#548AF7" stroke-width="1.3"/></svg>
<div class="t" style="left:2114px;top:120px;font-size:14px;color:#DFE1E5;">Profiles</div>
<svg style="left:2078px;top:148px" width="6" height="8" viewBox="0 0 6 8"><path d="M1.2 0.6 L4.6 4 L1.2 7.4" fill="none" stroke="#8C8F94" stroke-width="1.2"/></svg>
<div class="t" style="left:2095px;top:142.5px;font-size:17.5px;color:#5A8DF0;font-style:italic;letter-spacing:-1px;-webkit-text-stroke:0.4px #5A8DF0">m</div>
<div class="t" style="left:2113px;top:144px;font-size:14px;color:#DFE1E5;">s019</div>
<div class="a" style="left:2382px;top:707px;width:138px;height:26px;background:#FFFFFF;"></div>
<svg style="left:2354px;top:701px" width="35" height="35" viewBox="0 0 35 35"><g transform="rotate(-14 17 17)"><rect x="3" y="4" width="28" height="27" rx="4" fill="#F25A29"/><path d="M25 10.5 Q14 8 9.5 12 Q7 15.5 13 17 L20 18 Q24 19 21 22 Q17 25 8 23" fill="none" stroke="#FFFFFF" stroke-width="4.2" stroke-linecap="round"/></g></svg>
<svg style="left:2393px;top:711px" width="14" height="15" viewBox="0 0 14 15"><g fill="none" stroke="#1F6FD0" stroke-width="1.7"><rect x="1" y="3.5" width="12" height="7"/><path d="M7 0 V15"/></g></svg>
<svg style="left:2417px;top:713px" width="12" height="13" viewBox="0 0 12 13"><circle cx="3" cy="3.5" r="1.5" fill="none" stroke="#1F6FD0" stroke-width="1.3"/><path d="M9 8 Q10.5 8.5 9.5 10.5 Q8.5 12 7.3 12.5" fill="none" stroke="#1F6FD0" stroke-width="1.9" stroke-linecap="round"/></svg>
<svg style="left:2441px;top:711px" width="12" height="16" viewBox="0 0 12 16"><rect x="3.3" y="0.5" width="5.4" height="10" rx="2.7" fill="#1F6FD0"/><path d="M1 6.5 Q1 11.5 6 11.5 Q11 11.5 11 6.5 M6 11.5 V14.5 M3.5 15 H8.5" fill="none" stroke="#1F6FD0" stroke-width="1.3"/></svg>
<svg style="left:2464px;top:714px" width="15" height="12" viewBox="0 0 15 12"><rect x="0.8" y="0.8" width="13.4" height="10.4" rx="1.5" fill="none" stroke="#1F6FD0" stroke-width="1.3"/><g fill="#1F6FD0"><rect x="3" y="3" width="2" height="1.6"/><rect x="6.5" y="3" width="2" height="1.6"/><rect x="10" y="3" width="2" height="1.6"/><rect x="3" y="6" width="2" height="1.6"/><rect x="6.5" y="6" width="2" height="1.6"/><rect x="10" y="6" width="2" height="1.6"/><rect x="4" y="8.5" width="7" height="1.4"/></g></svg>
<svg style="left:2488px;top:710px" width="18" height="17" viewBox="0 0 18 17"><defs><linearGradient id="tsh" x1="0" y1="0" x2="1" y2="1"><stop offset="0" stop-color="#E8506A"/><stop offset="1" stop-color="#8B7BFF"/></linearGradient></defs><path d="M1 6 L5 3 Q8 5 10 3 L14 6 L12.5 9 L11.5 8.5 V16 H4 V8.5 L3 9 Z" fill="url(#tsh)"/><circle cx="14" cy="3" r="2.5" fill="#F25A29"/></svg>
<svg style="left:2510px;top:714px" width="10" height="14" viewBox="0 0 10 14"><rect x="0" y="0" width="8" height="5" rx="2.5" fill="#1F6FD0"/><rect x="0" y="7" width="8" height="5" rx="2.5" fill="#1F6FD0"/></svg>
<div class="t" style="left:50px;top:911px;font-size:13px;color:#DFE1E5;-webkit-text-stroke:0.45px #DFE1E5;letter-spacing:-0.3px">Run</div>
<svg style="left:98.8px;top:908px" width="22" height="22" viewBox="0 0 22 22"><path d="M12.4 8.6 Q12 9.6 9 9.6 Q4.2 9.6 4.2 13.5 Q4.6 17.1 8 17.3 L12 17.3" fill="#223325" stroke="#6BAF70" stroke-width="1.2"/><circle cx="16.2" cy="5.7" r="2.7" fill="#6BBF70"/><path d="M17.3 9 V11" stroke="#5E8F62" stroke-width="0.9"/><path d="M13.2 13.3 A3.3 3.3 0 1 0 17.6 13.3" fill="none" stroke="#E3E5E8" stroke-width="1.2"/><path d="M15.4 11.2 V14.6" stroke="#E3E5E8" stroke-width="1.2"/></svg>
<div class="t" style="left:122px;top:911px;font-size:14px;color:#DFE1E5;">ZwzApplication</div>
<svg style="left:229px;top:916px" width="7" height="7" viewBox="0 0 7 7"><path d="M0.5 0.5 L6.5 6.5 M6.5 0.5 L0.5 6.5" stroke="#8C8F94" stroke-width="1.1"/></svg>
<div class="a" style="left:38px;top:939px;width:2478px;height:1px;background:#1E1F22;"></div>
<div class="a" style="left:90px;top:937px;width:156px;height:3px;background:#4E5157;border-radius:1.5px"></div>
<div class="t" style="left:51px;top:950px;font-size:13.5px;color:#DFE1E5;">Console</div>
<div class="a" style="left:38px;top:973px;width:78px;height:2px;background:#5A5D63;"></div>
<svg style="left:124px;top:949px" width="18" height="16" viewBox="0 0 18 16"><g fill="none" stroke="#E08855" stroke-width="1.2"><circle cx="10" cy="8" r="6.5"/><circle cx="10" cy="8" r="2.5"/><path d="M0.5 8 H7"/></g></svg>
<div class="t" style="left:147px;top:950px;font-size:14px;color:#DFE1E5;">Actuator</div>
<svg style="left:218px;top:949px" width="16" height="17" viewBox="0 0 16 17"><path d="M13.2 4 A6.2 6.2 0 1 0 6 13.8" fill="none" stroke="#DFE1E5" stroke-width="1.2"/><path d="M10.2 1 L13.6 3.8 L10.5 6.8" fill="none" stroke="#DFE1E5" stroke-width="1.2"/><path d="M8.5 8.5 L14.5 12 L8.5 15.5 Z" fill="none" stroke="#5FB865" stroke-width="1.1" stroke-linejoin="round"/></svg>
<div class="a" style="left:246px;top:951px;width:12px;height:12px;background:#6E3A3D;border:1.2px solid #E5656D;border-radius:2px"></div>
<div class="a" style="left:268px;top:945px;width:1px;height:22px;background:#43454A;"></div>
<svg style="left:277px;top:950px" width="16" height="14" viewBox="0 0 16 14"><g fill="none" stroke="#DFE1E5" stroke-width="1.2"><path d="M1 4 Q1 3 2 3 H4.5 L6 1 H10 L11.5 3 H14 Q15 3 15 4 V12 Q15 13 14 13 H2 Q1 13 1 12 Z"/><circle cx="8" cy="8" r="2.6"/></g><circle cx="12.8" cy="5" r="0.7" fill="#DFE1E5"/></svg>
<svg style="left:304px;top:950px" width="15" height="15" viewBox="0 0 15 15"><g fill="none" stroke="#DFE1E5" stroke-width="1.2"><path d="M2.5 3.5 V1.8 Q2.5 0.8 3.5 0.8 H12.2 Q13.2 0.8 13.2 1.8 V13.2 Q13.2 14.2 12.2 14.2 H3.5 Q2.5 14.2 2.5 13.2 V11.5"/></g><path d="M0 7.5 H8.5 M6 4.8 L8.8 7.5 L6 10.2" fill="none" stroke="#E5656D" stroke-width="1.5"/></svg>
<svg style="left:329px;top:950px" width="18" height="17" viewBox="0 0 18 17"><g fill="none" stroke="#DFE1E5" stroke-width="1.2"><path d="M1.5 13.5 A7.5 7.5 0 1 1 16 13.5 Z" stroke-linejoin="round"/><circle cx="7" cy="9.5" r="1.5"/><path d="M8 8.5 L12 4.5"/></g><path d="M17.5 12.5 V16.5 H13.5 Z" fill="#DFE1E5"/></svg>
<svg style="left:361px;top:950px" width="4" height="14" viewBox="0 0 4 14"><g fill="#CED0D6"><rect x="0.8" y="1" width="2.2" height="2.2"/><rect x="0.8" y="6" width="2.2" height="2.2"/><rect x="0.8" y="11" width="2.2" height="2.2"/></g></svg>
<svg style="left:52px;top:986px" width="10" height="14" viewBox="0 0 10 14"><path d="M5 13.5 V1 M1 5 L5 1 L9 5" fill="none" stroke="#4B4E54" stroke-width="1.2"/></svg>
<svg style="left:52px;top:1012px" width="10" height="14" viewBox="0 0 10 14"><path d="M5 0.5 V13 M1 9 L5 13 L9 9" fill="none" stroke="#4B4E54" stroke-width="1.2"/></svg>
<svg style="left:49px;top:1038px" width="16" height="14" viewBox="0 0 16 14"><g fill="none" stroke="#CED0D6" stroke-width="1.2"><path d="M0.5 1.5 H15"/><path d="M0.5 6 H12.5 Q15 6 15 8.3 Q15 10.5 12.5 10.5 H8"/><path d="M9.8 8.6 L7.8 10.5 L9.8 12.4"/><path d="M0.5 10.5 H5"/></g></svg>
<div class="a" style="left:46px;top:1060px;width:22px;height:22px;background:#43454A;border-radius:3px"></div>
<svg style="left:49px;top:1064px" width="16" height="14" viewBox="0 0 16 14"><g fill="none" stroke="#CED0D6" stroke-width="1.2"><path d="M0.5 1.5 H7 M0.5 6 H7 M0.5 12.8 H15.5"/><path d="M11.5 0.5 V9.5 M8.5 6.8 L11.5 9.8 L14.5 6.8"/></g></svg>
<svg style="left:49px;top:1089px" width="16" height="15" viewBox="0 0 16 15"><g fill="none" stroke="#CED0D6" stroke-width="1.2"><path d="M3.5 4 V1 H12.5 V4"/><path d="M3.5 11.5 H1.5 Q0.6 11.5 0.6 10.5 V5 Q0.6 4 1.5 4 H14.5 Q15.4 4 15.4 5 V10.5 Q15.4 11.5 14.5 11.5 H12.5"/><path d="M3.5 8.5 H12.5 V14.2 H3.5 Z"/></g></svg>
<svg style="left:51px;top:1115px" width="12" height="16" viewBox="0 0 12 16"><g fill="none" stroke="#CED0D6" stroke-width="1.2"><path d="M0 3.5 H12"/><path d="M4 3.5 V1 H8 V3.5"/><path d="M1.5 3.5 V14 Q1.5 15 2.5 15 H9.5 Q10.5 15 10.5 14 V3.5"/><path d="M4.5 6.5 V12 M7.5 6.5 V12"/></g></svg>
<div class="a" style="left:76px;top:974px;width:2440px;height:286px;overflow:hidden">
<div class="ln" style="left:12px;top:-12px;color:#BCBEC4">SqlSession [org.apache.ibatis.session.defaults.DefaultSqlSession@6d136fd1] was not registered for synchronization because synchronization is not active</div>
<div class="ln" style="left:12px;top:10px;color:#BCBEC4">JDBC Connection [com.mysql.cj.jdbc.ConnectionImpl@7c8f4f1] will not be managed by Spring</div>
<div class="ln" style="left:12px;top:32px;color:#BCBEC4">==&gt;  Preparing: SELECT id,park_id,park_name,value,last_time,update_by,update_time,create_by,create_time,del_flag FROM a_smoke_sensor WHERE (park_id = ?) limit 1</div>
<div class="ln" style="left:12px;top:54px;color:#BCBEC4">==&gt; Parameters: 1622524394825977881(String)</div>
<div class="ln" style="left:12px;top:76px;color:#BCBEC4">&lt;==    Columns: id, park_id, park_name, value, last_time, update_by, update_time, create_by, create_time, del_flag</div>
<div class="ln" style="left:12px;top:98px;color:#BCBEC4">&lt;==        Row: 1623575375370129408, 1622524394825977881, <span class="cj">森</span><span class="cj">林</span><span class="cj">园</span><span class="cj">区</span>X, 55, 2024-11-05 20:58:32, API<span class="cj">接</span><span class="cj">口</span>, 2024-11-05 20:58:32.033000, admin, 2023-02-09 14:51:48.739000, 0</div>
<div class="ln" style="left:12px;top:120px;color:#BCBEC4">&lt;==      Total: 1</div>
<div class="ln" style="left:12px;top:142px;color:#BCBEC4">Closing non transactional SqlSession [org.apache.ibatis.session.defaults.DefaultSqlSession@6d136fd1]</div>
<div class="ln" style="left:12px;top:164px;color:#BCBEC4">Creating a new SqlSession</div>
<div class="ln" style="left:12px;top:186px;color:#BCBEC4">SqlSession [org.apache.ibatis.session.defaults.DefaultSqlSession@6a85b650] was not registered for synchronization because synchronization is not active</div>
<div class="ln" style="left:12px;top:208px;color:#BCBEC4">JDBC Connection [com.mysql.cj.jdbc.ConnectionImpl@7c8f4f1] will not be managed by Spring</div>
<div class="ln" style="left:12px;top:230px;color:#BCBEC4">==&gt;  Preparing: SELECT id,park_id,park_name,value,last_time,update_by,update_time,create_by,create_time,del_flag FROM a_temperature_sensor WHERE (park_id = ?) limit 1</div>
<div class="ln" style="left:12px;top:252px;color:#BCBEC4">==&gt; Parameters: 1622524394825977881(String)</div>
<div class="ln" style="left:12px;top:274px;color:#BCBEC4">&lt;==    Columns: id, park_id, park_name, value, last_time, update_by, update_time, create_by, create_time, del_flag</div>
</div>
<div class="a" style="left:2px;top:41px;width:30px;height:30px;background:#47494E;border-radius:5px"></div>
<svg style="left:8px;top:48px" width="20" height="16" viewBox="0 0 20 16"><path d="M1 2 Q1 0.8 2.2 0.8 H7 L9 3.2 H16.8 Q18 3.2 18 4.4 V14 Q18 15.2 16.8 15.2 H2.2 Q1 15.2 1 14 Z" fill="none" stroke="#CED0D6" stroke-width="1.3"/></svg>
<div class="a" style="left:4px;top:81px;width:25px;height:1px;background:#43454A;"></div>
<svg style="left:9px;top:99px" width="18" height="17" viewBox="0 0 18 17"><g fill="none" stroke="#CED0D6" stroke-width="1.3"><rect x="1" y="0.8" width="5" height="5" rx="1"/><rect x="1" y="10.5" width="5" height="5" rx="1"/><rect x="10.5" y="10.5" width="5" height="5" rx="1"/></g></svg>
<svg style="left:8.5px;top:145px" width="18" height="4" viewBox="0 0 18 4"><g fill="#CED0D6"><circle cx="2" cy="2" r="1.5"/><circle cx="9" cy="2" r="1.5"/><circle cx="16" cy="2" r="1.5"/></g></svg>
<svg style="left:8px;top:1128px" width="19" height="19" viewBox="0 0 19 19"><g fill="none" stroke="#CED0D6" stroke-width="1.3"><path d="M1 2.5 Q1 1 2.5 1 H13 Q17.5 1.5 18 6 Q16 3.5 13 4 H11.5 V16.8 Q11.5 17.5 10.8 17.5 H8.2 Q7.5 17.5 7.5 16.8 V4 H2.5 Q1 4 1 2.5 Z" stroke-linejoin="round"/></g></svg>
<svg style="left:8px;top:1168px" width="19" height="18" viewBox="0 0 19 18"><g fill="none" stroke="#CED0D6" stroke-width="1.3"><path d="M5 1 H14 L18.5 8.5 L14 16.5 H5 L0.8 8.5 Z" stroke-linejoin="round"/><path d="M7.3 5 L13 8.5 L7.3 12 Z" stroke-linejoin="round"/></g></svg>
<div class="a" style="left:2px;top:1202px;width:30px;height:30px;background:#47494E;border-radius:5px"></div>
<svg style="left:9px;top:1208px" width="18" height="18" viewBox="0 0 18 18"><path d="M1.5 1.5 L14.5 9 L1.5 16.5 Z" fill="none" stroke="#CED0D6" stroke-width="1.3" stroke-linejoin="round"/></svg>
<svg style="left:20px;top:1207px" width="8" height="8" viewBox="0 0 8 8"><circle cx="3.6" cy="3.6" r="3.4" fill="#5FB865"/></svg>
<svg style="left:8px;top:1248px" width="19" height="16" viewBox="0 0 19 16"><g fill="none" stroke="#CED0D6" stroke-width="1.3"><rect x="0.8" y="0.8" width="17.4" height="15" rx="1.5"/><path d="M4.5 5 L7.5 7.8 L4.5 10.6"/><path d="M9.5 11.5 H14"/></g></svg></body></html>
